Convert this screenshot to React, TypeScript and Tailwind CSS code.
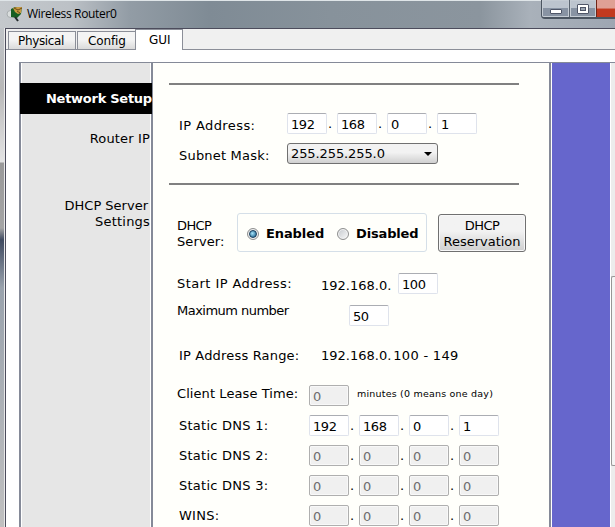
import React from "react";

type OctetProps = { value: string; disabled?: boolean; className?: string };

function Field({ value, disabled = false, className = "" }: OctetProps) {
  return (
    <div
      className={`h-[21px] w-10 shrink-0 rounded-[2px] border pl-[3px] text-[13px] leading-[21px] tracking-[-0.4px] ${
        disabled
          ? "border-[#afafaf] bg-[#f0f0f0] text-[#6d6d6d] shadow-[inset_0_0_0_1px_#f8f8f8]"
          : "border-[#dfe3ec] border-t-[#abadb3] bg-white text-black"
      } ${className}`}
    >
      {value}
    </div>
  );
}

function Address({ values, disabled = false }: { values: string[]; disabled?: boolean }) {
  return (
    <div className="flex">
      {values.map((v, i) => (
        <div key={i} className="flex w-[50px]">
          <Field value={v} disabled={disabled} />
          {i < 3 && <span className="pl-px pt-[3px] leading-4">.</span>}
        </div>
      ))}
    </div>
  );
}

function Rule() {
  return <div className="ml-4 h-[2px] w-[350px] shrink-0 bg-[#808080]" />;
}

function Radio({ checked = false }: { checked?: boolean }) {
  return (
    <span className="flex size-3 items-center justify-center rounded-full border border-[#8e8f8f] bg-linear-to-br from-[#c5c9cd] to-[#fafafa] shadow-[inset_0_0_0_1px_#f4f4f4]">
      {checked && (
        <span className="size-2 rounded-full border border-[#173d5c] bg-radial-[at_40%_40%] from-[#a5e3fa] to-[#0b5280]" />
      )}
    </span>
  );
}

function DnsRow({ label, values, disabled }: { label: string; values: string[]; disabled?: boolean }) {
  return (
    <div className="flex h-[30px] shrink-0 pl-[26px]">
      <span className="w-[130px] pt-[3px] leading-4 tracking-[0.25px]">{label}</span>
      <Address values={values} disabled={disabled} />
    </div>
  );
}

function TitleBar() {
  return (
    <div className="flex h-7 shrink-0 items-start justify-between border-t border-[#dfe5e8] bg-[linear-gradient(90deg,#c4c8cc_0px,#bcc1c6_70px,#929ca5_130px,#7f8b95_210px,#87929b_330px,#8b959e_480px,#a9b1ba_530px,#9ea6b2_615px)]">
      <div className="flex pl-[6px] pt-[4px]">
        <svg width="17" height="18" viewBox="0 0 17 18">
          <circle cx="4.500" cy="9" r="3.500" fill="#d9dddd" stroke="#a9aeb0" />
          <path d="M5 4l4-2 7 0-1 7-4 4-6-1z" fill="#175f22" />
          <path d="M7 3l4-1 5 0-1 6-3 1-3-2z" fill="#c79a42" />
          <path d="M8 3l4 2 4-2M11 6l3 2" stroke="#6e4a16" fill="none" />
          <path d="M9 12l3 4" stroke="#252b2d" strokeWidth="2" />
        </svg>
        <span className="pl-[4px] font-['Open_Sans','Noto_Sans',sans-serif] text-[12px] leading-[18px] tracking-[-0.33px] text-black">
          Wireless Router0
        </span>
      </div>
      <div className="-mt-px flex h-[19px] w-[74px] overflow-hidden rounded-bl-[4px] border-b-2 border-l border-[#4b5561]">
        <div className="flex w-7 items-end justify-center border-r border-[#5a6470] bg-linear-to-b from-[#bcc4ce] from-45% to-[#8893a3] to-50% pb-[3px] shadow-[inset_0_0_0_1px_#c4cbd3]">
          <span className="h-[5px] w-3 rounded-[1px] border border-[#4f5668] bg-white" />
        </div>
        <div className="flex w-[27px] items-end justify-center border-r border-[#702517] bg-linear-to-b from-[#bcc4ce] from-45% to-[#8893a3] to-50% pb-[3px] shadow-[inset_0_0_0_1px_#c4cbd3]">
          <span className="flex h-[10px] w-3 items-center justify-center rounded-[1px] border border-[#4f5668] bg-white">
            <span className="h-1 w-[6px] border border-[#4f5668] bg-[#9aa4b1]" />
          </span>
        </div>
        <div className="grow bg-linear-to-b from-[#dfa095] from-45% to-[#c23a20] to-55%" />
      </div>
    </div>
  );
}

function Tabs() {
  return (
    <div className="flex h-[21px] shrink-0 items-end bg-[#f0f0f0] text-[12px]">
      <div className="flex h-[21px] w-[129px] items-end border-b border-[#8b8e98] pl-[2px]">
        <div className="h-[18px] w-[68px] border-x border-t border-[#8b8e98] bg-linear-to-b from-[#f4f4f4] from-45% to-[#dadada] pl-[9px] leading-[18px] tracking-[-0.35px]">
          Physical
        </div>
        <div className="ml-px h-[18px] w-[58px] border-l border-t border-[#8b8e98] bg-linear-to-b from-[#f4f4f4] from-45% to-[#dadada] pl-[10px] leading-[18px] tracking-[-0.15px]">
          Config
        </div>
      </div>
      <div className="h-[21px] w-[48px] border-x border-t border-[#8b8e98] bg-white pl-[13px] leading-[20px]">
        GUI
      </div>
      <div className="h-[21px] grow border-b border-[#8b8e98]" />
    </div>
  );
}

function Sidebar() {
  return (
    <div className="flex w-[134px] shrink-0 flex-col border-x-2 border-[#858a98] bg-[#e6e6e6] shadow-[inset_1px_0_white,inset_-1px_0_white]">
      <div className="-ml-px mt-5 h-[31px] w-[132px] shrink-0 overflow-hidden whitespace-nowrap bg-black pl-[26px] font-bold leading-[31px] tracking-[-0.27px] text-white">
        Network Setup
      </div>
      <div className="pr-px pt-[17px] text-right leading-4 tracking-[0.15px]">Router IP</div>
      <div className="pr-px pt-[51px] text-right leading-4">
        <span className="pr-[2px]">DHCP Server</span>
        <br />
        <span className="tracking-[0.2px]">Settings</span>
      </div>
    </div>
  );
}

function SetupForm() {
  return (
    <div className="flex w-[396px] shrink-0 flex-col overflow-hidden whitespace-nowrap bg-[#fffffb] pt-5">
      <Rule />
      <div className="flex h-[58px] shrink-0 pl-[26px] pt-7">
        <span className="w-[108px] pt-[5px] leading-4 tracking-[0.4px]">IP Address:</span>
        <Address values={["192", "168", "0", "1"]} />
      </div>
      <div className="flex h-10 shrink-0 pl-[26px]">
        <span className="w-[108px] pt-[5px] leading-4 tracking-[0.2px]">Subnet Mask:</span>
        <div className="flex h-[21px] w-[151px] items-center justify-between rounded-[3px] border border-[#707070] bg-linear-to-b from-[#f2f2f2] from-45% to-[#d0d0d0] pl-[3px] pr-[5px]">
          <span className="tracking-[-0.1px]">255.255.255.0</span>
          <svg width="8" height="4" viewBox="0 0 8 4">
            <path d="M0 0h8L4 4z" fill="black" />
          </svg>
        </div>
      </div>
      <Rule />
      <div className="flex h-[88px] shrink-0 pl-6 pt-7">
        <span className="w-[60px] pt-[5px] leading-4 tracking-[0.1px]">
          <span className="tracking-[-0.6px]">DHCP</span>
          <br />
          Server:
        </span>
        <div className="flex h-[39px] w-[190px] items-center rounded-[3px] border border-[#d5dfe8] pl-[9px] pt-[2px] font-bold">
          <Radio checked />
          <span className="w-[78px] pl-[7px] tracking-[-0.1px]">Enabled</span>
          <Radio />
          <span className="pl-[7px] tracking-[-0.15px]">Disabled</span>
        </div>
        <div className="ml-[11px] mt-px h-[38px] w-[88px] rounded-[3px] border border-[#707070] bg-linear-to-b from-[#f2f2f2] from-45% to-[#cfcfcf] pt-[3px] text-center leading-4 shadow-[inset_0_0_0_1px_#f8f8f8]">
          <span className="tracking-[-0.6px]">DHCP</span>
          <br />
          Reservation
        </div>
      </div>
      <div className="flex h-8 shrink-0 pl-6">
        <span className="w-36 pt-[3px] leading-4 tracking-[0.42px]">Start IP Address:</span>
        <span className="w-[77px] pt-[5px] leading-4">192.168.0.</span>
        <Field value="100" />
      </div>
      <div className="flex h-[42px] shrink-0 pl-6">
        <span className="w-[172px] leading-[12px] tracking-[-0.52px]">Maximum number</span>
        <Field value="50" />
      </div>
      <div className="flex h-[38px] shrink-0 pl-[26px] pt-px leading-4">
        <span className="w-[142px] tracking-[0.18px]">IP Address Range:</span>
        <span>192.168.0.</span>
        <span className="pl-[2px] tracking-[0.3px]">100 - 149</span>
      </div>
      <div className="flex h-[30px] shrink-0 pl-6">
        <span className="w-[132px] pt-px leading-4 tracking-[0.08px]">Client Lease Time:</span>
        <Field value="0" disabled />
        <span className="pl-2 pt-px text-[9.5px] leading-4 tracking-[0.2px]">minutes (0 means one day)</span>
      </div>
      <DnsRow label="Static DNS 1:" values={["192", "168", "0", "1"]} />
      <DnsRow label="Static DNS 2:" values={["0", "0", "0", "0"]} disabled />
      <DnsRow label="Static DNS 3:" values={["0", "0", "0", "0"]} disabled />
      <DnsRow label="WINS:" values={["0", "0", "0", "0"]} disabled />
    </div>
  );
}

export default function App() {
  return (
    <div className="flex h-[527px] w-[615px] flex-col overflow-hidden bg-white font-['DejaVu_Sans',Verdana,sans-serif] text-[13px] text-black">
      <TitleBar />
      <div className="flex min-h-0 grow">
        <div className="w-[5px] shrink-0 border-r border-[#e8e8e8] bg-[linear-gradient(180deg,#c0c4c8_0px,#b8b8b8_60px,#e4e4e4_134px,#9a9a9a_135px,#a5a5a5_200px,#3f4a60_212px,#9aa3ad_260px,#c0c0c0_499px)]" />
        <div className="flex min-w-0 grow flex-col border-l border-t border-[#4c4c5c] bg-white">
          <Tabs />
          <div className="ml-[13px] mt-3 flex min-h-0 grow border-t border-[#858a98]">
            <Sidebar />
            <SetupForm />
            <div className="w-[62px] shrink-0 border-l-2 border-[#858a98] bg-[#6666cc] shadow-[inset_1px_0_white,inset_-1px_0_white]" />
            <div className="flex grow flex-col bg-[#ececec] pt-[213px]">
              <div className="h-[190px] rounded-l-[2px] border-y border-l border-[#979797] bg-[#f5f5f5]" />
            </div>
          </div>
        </div>
      </div>
    </div>
  );
}
